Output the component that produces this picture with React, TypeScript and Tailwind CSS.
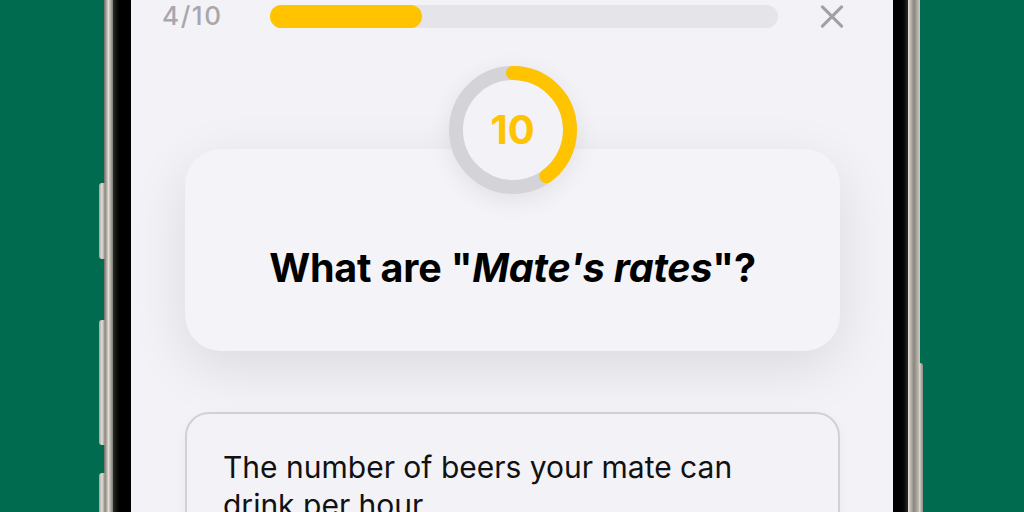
import React from 'react';

const font = { fontFamily: 'Inter, "Noto Sans", sans-serif' };

function TimerRing({ seconds, progress }: { seconds: number; progress: number }) {
  const r = 57;
  const c = 2 * Math.PI * r;
  return (
    <div className="relative z-10 mx-auto w-[128px] h-[128px] rounded-full bg-[#f2f2f7] shadow-[0_6px_24px_rgba(0,0,0,0.08)]">
      <svg width="128" height="128" viewBox="0 0 128 128" className="absolute inset-0 -rotate-90">
        <circle cx="64" cy="64" r={r} fill="none" stroke="#d3d3d8" strokeWidth="14" />
        <circle
          cx="64"
          cy="64"
          r={r}
          fill="none"
          stroke="#ffc300"
          strokeWidth="14"
          strokeLinecap="round"
          strokeDasharray={`${c * progress} ${c}`}
        />
      </svg>
      <div className="absolute inset-0 flex items-center justify-center text-[40px] font-bold text-[#ffc300] leading-none">
        {seconds}
      </div>
    </div>
  );
}

export default function App() {
  const current = 4;
  const total = 10;

  return (
    <main className="w-[1024px] h-[512px] overflow-hidden bg-[#006b4e] flex justify-center" style={font}>
      {/* phone */}
      <div className="relative h-full w-[816px] flex">
        {/* side buttons */}
        <div className="absolute left-[-5px] top-[183px] w-[6px] h-[76px] rounded-l-[3px] bg-gradient-to-r from-[#a6a199] via-[#e4e0d8] to-[#8f8b84]" />
        <div className="absolute left-[-5px] top-[320px] w-[6px] h-[125px] rounded-l-[3px] bg-gradient-to-r from-[#a6a199] via-[#e4e0d8] to-[#8f8b84]" />
        <div className="absolute left-[-5px] top-[473px] w-[6px] h-[60px] rounded-l-[3px] bg-gradient-to-r from-[#a6a199] via-[#e4e0d8] to-[#8f8b84]" />
        <div className="absolute right-[-3px] top-[363px] w-[4px] h-[160px] rounded-r-[3px] bg-gradient-to-r from-[#e4e0d8] to-[#8f8b84]" />

        {/* frame left */}
        <div className="w-[9px] bg-gradient-to-r from-[#6f6b65] via-[#e2ded6] to-[#7d7973]" />
        <div className="w-[18px] bg-gradient-to-r from-[#2a2a2a] via-black to-black" />

        {/* screen */}
        <div className="flex-1 bg-[#f2f2f7] flex flex-col">
          {/* top bar */}
          <div className="flex items-center pt-[4px] pl-[31px] pr-[49px] h-[28px]">
            <span className="text-[26px] font-medium text-[#a7a7ac] tracking-[0.06em] w-[61px] leading-none">
              {current}/{total}
            </span>
            <div className="ml-[47px] w-[508px] h-[23px] rounded-full bg-[#e4e4e9]">
              <div className="h-full w-[152px] rounded-full bg-[#ffc300]" />
            </div>
            <div className="ml-auto w-[24px] h-[23px]">
              <svg viewBox="0 0 24 24" width="24" height="23" fill="none" stroke="#a0a0a5" strokeWidth="3.2" strokeLinecap="round">
                <path d="M2 2 L22 22 M22 2 L2 22" />
              </svg>
            </div>
          </div>

          <div className="pl-[54px] pr-[53px] mt-[38px]">
            <TimerRing seconds={10} progress={0.4} />

            <div className="mt-[-45px] h-[202px] rounded-[36px] bg-[#f3f3f8] shadow-[0_16px_56px_rgba(0,0,0,0.1)] pt-[96px] text-center">
              <h1 className="text-[39.5px] leading-[46px] font-bold text-black tracking-[-0.005em]">
                What are "<em className="italic">Mate's rates</em>"?
              </h1>
            </div>

            <button className="mt-[61px] w-full text-left rounded-[24px] border-2 border-[#d0d0d5] bg-[#f2f2f7] shadow-[0_4px_14px_rgba(0,0,0,0.04)] pt-[34px] pb-[30px] pl-[36px] pr-[40px]">
              <span className="block text-[30px] leading-[38px] text-[#111]">
                The number of beers your mate can drink per hour.
              </span>
            </button>
          </div>
        </div>

        {/* frame right */}
        <div className="w-[15px] bg-gradient-to-r from-black via-black to-[#2a2a2a]" />
        <div className="w-[12px] bg-gradient-to-r from-[#e4e0d8] via-[#8a867f] to-[#cfcbc3]" />
      </div>
    </main>
  );
}
